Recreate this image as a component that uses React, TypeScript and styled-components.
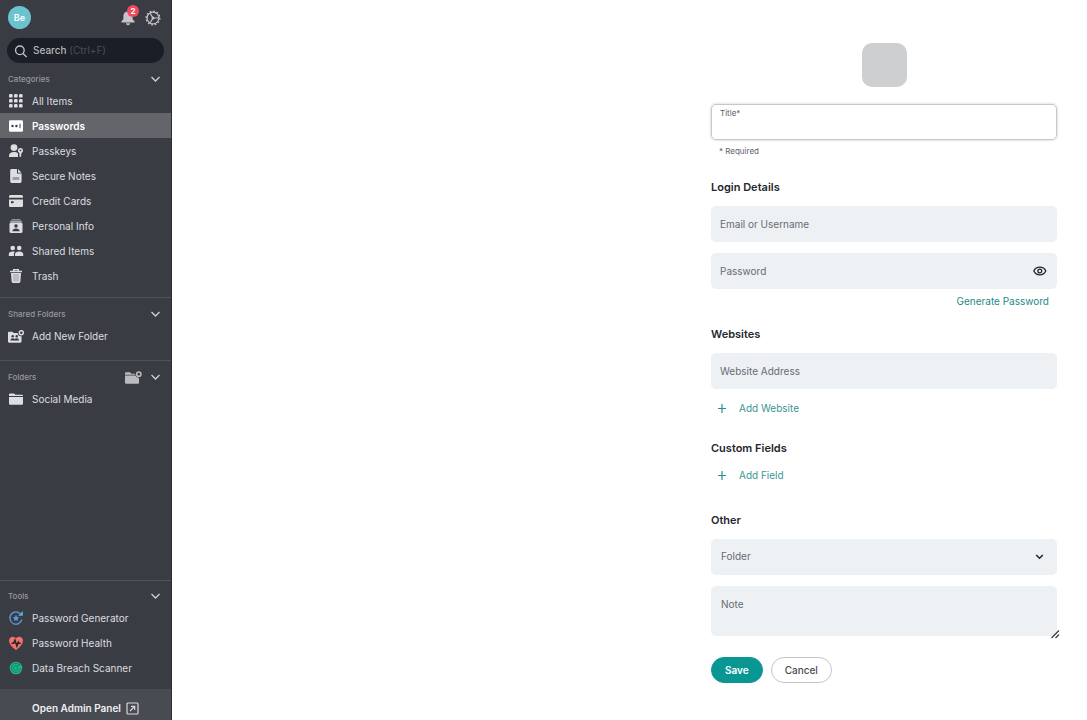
import React from 'react';
import styled, { createGlobalStyle } from 'styled-components';

const GlobalStyle = createGlobalStyle`
  * { box-sizing: border-box; }
  body {
    margin: 0;
    background: #fff;
    font-family: Inter, "Liberation Sans", sans-serif;
    font-size: 10px;
    line-height: 16px;
    color: #23272e;
  }
  button, input, select, textarea { font: inherit; color: inherit; }
  button { cursor: pointer; }
`;

const Page = styled.div`
  display: flex;
  min-height: 100vh;
`;

/* ---------- sidebar ---------- */

const Sidebar = styled.aside`
  flex: 0 0 172px;
  display: flex;
  flex-direction: column;
  background: #3a3c43;
  border-right: 1px solid #2c2e36;
  color: #d3d5d8;
`;

const TopBar = styled.header`
  display: flex;
  align-items: center;
  gap: 9px;
  height: 35px;
  padding: 0 10px 0 8px;
`;

const Avatar = styled.button`
  width: 23px;
  height: 23px;
  margin-right: auto;
  padding: 0;
  border: 0;
  border-radius: 50%;
  background: #6bc3d0;
  color: #fff;
  font-size: 9px;
  font-weight: 600;
`;

const IconButton = styled.button`
  position: relative;
  display: flex;
  padding: 0;
  border: 0;
  background: none;
`;

const Badge = styled.span`
  position: absolute;
  top: -5px;
  right: -3px;
  width: 12px;
  height: 12px;
  border-radius: 50%;
  background: #f4485c;
  color: #fff;
  font-size: 8px;
  font-weight: 700;
  line-height: 12px;
  text-align: center;
`;

const SearchButton = styled.button`
  display: flex;
  align-items: center;
  gap: 5px;
  height: 25px;
  margin: 3px 7px 7px;
  padding: 0 7px;
  border: 0;
  border-radius: 13px;
  background: #1b1e27;
  color: #b4b6ba;
  font-weight: 500;
`;

const SearchText = styled.span`
  padding-bottom: 2px;
`;

const Shortcut = styled.span`
  color: #4b4e57;
  font-weight: 400;
`;

const NavSection = styled.section<{ $divided?: boolean; $bottom?: boolean }>`
  padding: ${(p) => (p.$divided ? '7px 0 12px' : '0 0 9px')};
  border-top: ${(p) => (p.$divided || p.$bottom ? '1px solid #505259' : '0')};
  ${(p) => p.$bottom && 'margin-top: auto; padding-top: 6px;'}
`;

const SectionHead = styled.div`
  display: flex;
  align-items: center;
  gap: 8px;
  height: 18px;
  padding: 0 10px 0 8px;
`;

const SectionTitle = styled.h2`
  flex: 1;
  margin: 0;
  font-size: 8px;
  font-weight: 500;
  line-height: 12px;
  color: #96989d;
`;

const NavLink = styled.a<{ $active?: boolean }>`
  display: flex;
  align-items: center;
  gap: 8px;
  height: 25px;
  padding: 0 8px;
  background: ${(p) => (p.$active ? '#63656b' : 'transparent')};
  color: ${(p) => (p.$active ? '#fff' : '#dcdee0')};
  font-weight: ${(p) => (p.$active ? 600 : 400)};
  text-decoration: none;
  white-space: nowrap;
`;

const AdminLink = styled.a`
  display: flex;
  align-items: center;
  justify-content: center;
  gap: 5px;
  height: 31px;
  padding-top: 7px;
  background: #484b52;
  color: #f0f1f2;
  font-weight: 600;
  text-decoration: none;
`;

/* ---------- form ---------- */

const Main = styled.main`
  flex: 1;
  min-width: 0;
  display: flex;
  justify-content: flex-end;
`;

const Form = styled.form`
  flex: 0 1 406px;
  min-width: 0;
  padding: 43px 30px 36px;
`;

const ItemPicture = styled.div`
  width: 45px;
  height: 44px;
  margin: 0 auto 17px;
  border-radius: 10px;
  background: #cdcfd1;
`;

const Field = styled.label`
  display: flex;
  align-items: center;
  gap: 8px;
  height: 36px;
  padding: 0 9px;
  border-radius: 5px;
  background: #eef1f4;
  color: #666c73;
  & + & { margin-top: 11px; }
`;

const TitleField = styled.label`
  display: flex;
  flex-direction: column;
  height: 36px;
  padding: 2px 8px;
  border: 1px solid #c4c8cc;
  border-radius: 5px;
  box-shadow: 0 0 3px #c4c8cc;
  color: #5c626a;
  font-size: 8px;
  line-height: 12px;
`;

const Input = styled.input`
  flex: 1;
  min-width: 0;
  padding: 0;
  border: 0;
  outline: 0;
  background: none;
  color: #23272e;
`;

const Hint = styled.p`
  margin: 4px 8px 0;
  font-size: 8px;
  line-height: 14px;
  color: #5c626a;
`;

const Group = styled.section<{ $space: number }>`
  margin-top: ${(p) => p.$space}px;
`;

const GroupTitle = styled.h3`
  margin: 0 0 11px;
  font-size: 11px;
  font-weight: 600;
  line-height: 16px;
  color: #23272e;
`;

const TextLink = styled.a`
  display: block;
  width: fit-content;
  margin: 4px 8px 0 auto;
  color: #248a88;
  text-decoration: none;
`;

const AddButton = styled.button`
  display: flex;
  align-items: center;
  gap: 12px;
  margin-top: 11px;
  padding: 0 6px;
  border: 0;
  background: none;
  color: #3b9593;
  line-height: 16px;
`;

const SelectWrap = styled.div`
  display: grid;
  align-items: center;
  & > * { grid-area: 1 / 1; }
  & > svg { justify-self: end; margin-right: 13px; pointer-events: none; }
`;

const Select = styled.select`
  appearance: none;
  width: 100%;
  height: 36px;
  padding: 0 30px 2px 10px;
  border: 0;
  border-radius: 5px;
  background: #eef1f4;
  color: #666c73;
`;

const NoteWrap = styled.div`
  position: relative;
  display: flex;
  margin-top: 11px;
`;

const Note = styled.textarea`
  flex: 1;
  min-width: 0;
  height: 50px;
  padding: 10px;
  border: 0;
  border-radius: 5px;
  background: #eef1f4;
  line-height: 16px;
  resize: none;
  &::placeholder { color: #666c73; opacity: 1; }
`;

const Grip = styled.svg`
  position: absolute;
  right: -3px;
  bottom: -3px;
`;

const Actions = styled.div`
  display: flex;
  gap: 8px;
  margin-top: 21px;
`;

const PillButton = styled.button<{ $primary?: boolean }>`
  height: 26px;
  padding: 0 13px;
  border: 1px solid ${(p) => (p.$primary ? '#0a9794' : '#c3c6cb')};
  border-radius: 13px;
  background: ${(p) => (p.$primary ? '#0a9794' : '#fff')};
  color: ${(p) => (p.$primary ? '#fff' : '#484c53')};
  font-weight: ${(p) => (p.$primary ? 600 : 500)};
`;

/* ---------- icons ---------- */

const Icon = ({ children, size = 16 }: { children: React.ReactNode; size?: number }) => (
  <svg width={size} height={size} viewBox="0 0 16 16" fill="none" aria-hidden="true">
    {children}
  </svg>
);

const light = '#dcdee0';
const bg = '#3a3c43';

const Chevron = () => (
  <svg width="11" height="8" viewBox="0 0 11 8" fill="none" aria-hidden="true">
    <path d="M1.5 2l4 4 4-4" stroke="#d0d2d5" strokeWidth="1.3" />
  </svg>
);

const GridIcon = () => (
  <Icon>
    {[1, 6, 11].map((y) => [1, 6, 11].map((x) => (
      <rect key={`${x}-${y}`} x={x} y={y} width="3.6" height="3.6" rx="1.2" fill={light} />
    )))}
  </Icon>
);

const PasswordIcon = () => (
  <Icon>
    <rect x="1" y="2.2" width="14" height="11.6" rx="1.4" fill="#fff" />
    <circle cx="4.5" cy="8" r="1.2" fill="#3a3c43" />
    <circle cx="8.4" cy="8" r="1.2" fill="#3a3c43" />
    <path d="M12 5.8v4.4" stroke="#3a3c43" />
  </Icon>
);

const PasskeyIcon = () => (
  <Icon>
    <circle cx="6" cy="4.6" r="3.4" fill={light} />
    <path d="M1 14v-1.5C1 10.2 3 9 6 9c1.7 0 3.200.4 4 1.200V14z" fill={light} />
    <path fillRule="evenodd" d="M12.500 5a2.600 2.600 0 0 1 1 5v1l-.8.900.8.900-1.200 1.400-.9-.9V10a2.600 2.600 0 0 1 1.100-5zm0 1.400a.9.9 0 1 0 0 1.800.9.9 0 0 0 0-1.800z" fill={light} />
  </Icon>
);

const NoteIcon = () => (
  <Icon>
    <path d="M3.600 1H9v4.600h4.600v8a1.400 1.400 0 0 1-1.400 1.400H3.600a1.400 1.400 0 0 1-1.400-1.400V2.400A1.400 1.400 0 0 1 3.600 1z" fill={light} />
    <path d="M10 1l3.600 3.700H10z" fill={light} />
    <path d="M4.600 9h6.600v3H4.600z" fill="#9b9da1" />
  </Icon>
);

const CardIcon = () => (
  <Icon>
    <path d="M1 4.800V3.600C1 2.700 1.700 2 2.600 2h10.800c.9 0 1.600.7 1.600 1.600v1.200z" fill={light} />
    <path d="M1 6.400h14v6c0 .9-.7 1.600-1.600 1.600H2.600C1.700 14 1 13.300 1 12.400z" fill={light} />
    <path d="M3 8.200h2.600v2H3z" fill={bg} />
  </Icon>
);

const PersonalIcon = () => (
  <Icon>
    <path d="M4 1h8l1 1.400H3z" fill="#8c8e93" />
    <path d="M2.600 2.800h10.800l1 1.400H1.600z" fill="#a3a5a9" />
    <rect x="1.500" y="4.500" width="13" height="10.500" rx="1.600" fill={light} />
    <circle cx="8" cy="8" r="1.800" fill={bg} />
    <path d="M4.400 13.300c0-1.900 1.500-2.700 3.600-2.700s3.600.8 3.600 2.700z" fill={bg} />
  </Icon>
);

const PeopleIcon = () => (
  <Icon>
    <circle cx="4.700" cy="5" r="2.300" fill={light} />
    <circle cx="11.200" cy="5" r="2.300" fill={light} />
    <path d="M.8 13v-1.800C.8 9.400 2.300 8.500 4.700 8.500c.9 0 1.600.1 2.200.4-.8.700-1 1.500-1 2.400V13z" fill={light} />
    <path d="M7 13v-1.800c0-1.800 1.700-2.700 4.200-2.700s4 .9 4 2.700V13z" fill={light} />
  </Icon>
);

const TrashIcon = () => (
  <Icon>
    <path d="M2 3.500h12M5.700 3V1.600h4.600V3" stroke={light} strokeWidth="1.400" />
    <path d="M3 5h10l-.6 8.600c0 .8-.6 1.400-1.400 1.400H5c-.8 0-1.400-.6-1.400-1.400z" fill={light} />
    <path d="M6 6v7.500M8 6v7.500M10 6v7.500" stroke="#8c8e93" strokeWidth=".8" />
  </Icon>
);

const SharedFolderIcon = () => (
  <Icon>
    <path d="M0 4.900C0 4.200.5 3.700 1.200 3.700h3.300l1.200 1.400h3.900a3.400 3.400 0 0 0 3.900 3v5.400c0 .7-.5 1.200-1.200 1.200H1.200C.5 14.700 0 14.200 0 13.500z" fill={light} />
    <circle cx="13.300" cy="4.700" r="2" stroke={light} strokeWidth="1.400" />
    <circle cx="4.700" cy="8.200" r="1.200" fill={bg} />
    <circle cx="8.700" cy="8.200" r="1.200" fill={bg} />
    <path d="M2.500 12.600c0-1.600.8-2.400 2.200-2.400 1 0 1.600.3 2 .9.400-.6 1-.9 2-.9 1.500 0 2.300.8 2.300 2.400z" fill={bg} />
  </Icon>
);

const NewFolderIcon = () => (
  <Icon size={17}>
    <path d="M0 4.200C0 3.500.5 3 1.200 3h3.600L6 4.400h3.700v1H0z" fill="#b9bbbf" />
    <path d="M0 6h9.800a3.500 3.500 0 0 0 3.400 2.300v4.300c0 .7-.5 1.200-1.200 1.200H1.200c-.7 0-1.200-.5-1.200-1.200z" fill="#b9bbbf" />
    <circle cx="13" cy="4.900" r="2" stroke="#b9bbbf" strokeWidth="1.400" />
  </Icon>
);

const FolderIcon = () => (
  <Icon>
    <path d="M1 5V3.700c0-.7.500-1.200 1.200-1.200h3.900l1.300 1.300h6.400c.7 0 1.200.5 1.200 1.200z" fill={light} />
    <path d="M1 6h14v6.500c0 .8-.6 1.300-1.300 1.300H2.300C1.600 13.800 1 13.300 1 12.500z" fill={light} />
  </Icon>
);

const GeneratorIcon = () => (
  <Icon>
    <path d="M13.900 9.500A6.100 6.100 0 1 1 12.300 3.700" stroke="#5a8fcd" strokeWidth="1.500" />
    <path d="M14.800 1v4.700h-4.700z" fill="#55b4dc" />
    <path d="M8 4.800l1 2.100 2.300.3-1.700 1.600.4 2.300L8 10l-2 1.100.4-2.300-1.700-1.600 2.300-.3z" fill="#5f9ade" />
  </Icon>
);

const HealthIcon = () => (
  <Icon>
    <path d="M8 15C3.500 11.600 1 9 1 5.700 1 3.400 2.700 1.700 4.800 1.700c1.300 0 2.500.7 3.200 1.800.7-1.100 1.900-1.800 3.200-1.800C13.300 1.700 15 3.400 15 5.700 15 9 12.500 11.600 8 15z" fill="#f9706a" />
    <path d="M3.500 8.200h2.200l1.200-2.900 2 5.600 1.400-3.600.6.900h1.800" stroke="#222630" strokeWidth="1.600" />
  </Icon>
);

const ScannerIcon = () => (
  <Icon>
    <circle cx="8" cy="8" r="6.300" fill="#20b58b" />
    <path d="M11.900 5.400A4.600 4.600 0 1 0 12.600 8M10 6.600A2.400 2.400 0 1 0 10.400 8M8 8l4.500-4" stroke="#17806a" strokeWidth="1" />
  </Icon>
);

const BellIcon = () => (
  <Icon>
    <path d="M8 1.500c3 0 4.600 2 4.600 4.800v2.900l1.900 2.100v1.200h-13v-1.200l1.900-2.100V6.300C3.400 3.500 5 1.500 8 1.500zM6 13.300h4c0 1.200-.9 1.900-2 1.900s-2-.7-2-1.900z" fill="#c3c5c8" />
  </Icon>
);

const SettingsIcon = () => (
  <Icon>
    <circle cx="8" cy="8" r="6.900" stroke="#c3c5c8" strokeWidth="1.200" strokeDasharray="1.800 1.800" />
    <circle cx="8" cy="8" r="5.900" stroke="#c3c5c8" strokeWidth="1.200" />
    <path d="M5 3l3 5-3 5M8 8h6" stroke="#c3c5c8" strokeWidth="1.200" />
    <circle cx="8" cy="8" r="1.500" fill="#c3c5c8" />
  </Icon>
);

const SearchIcon = () => (
  <Icon size={14}>
    <circle cx="6.700" cy="7.200" r="4.900" stroke="#c3c5c8" strokeWidth="1.500" />
    <path d="M10.300 10.800l4.200 4.200" stroke="#c3c5c8" strokeWidth="1.600" />
  </Icon>
);

const ExternalIcon = () => (
  <svg width="13" height="13" viewBox="0 0 13 13" fill="none" aria-hidden="true">
    <rect x="1" y="1" width="11" height="11" rx="1" stroke="#d7d9db" strokeWidth="1.200" />
    <path d="M4 9l4.500-4.500M5 4.300h3.700V8" stroke="#d7d9db" strokeWidth="1.200" />
  </svg>
);

const EyeIcon = () => (
  <svg width="15" height="10" viewBox="0 0 15 10" fill="none" aria-hidden="true">
    <path d="M.8 5C2 2.500 4.200 1.200 6.800 1.200S11.600 2.500 12.800 5C11.600 7.500 9.400 8.800 6.800 8.800S2 7.500.8 5z" stroke="#20242b" strokeWidth="1.300" />
    <circle cx="6.800" cy="5" r="1.900" stroke="#20242b" strokeWidth="1.300" />
  </svg>
);

const PlusIcon = () => (
  <svg width="10" height="10" viewBox="0 0 10 10" fill="none" aria-hidden="true">
    <path d="M5 1v9M1 5.500h8" stroke="#2a908e" strokeWidth="1.200" />
  </svg>
);

/* ---------- content ---------- */

const categories = [
  { name: 'All Items', icon: <GridIcon /> },
  { name: 'Passwords', icon: <PasswordIcon />, active: true },
  { name: 'Passkeys', icon: <PasskeyIcon /> },
  { name: 'Secure Notes', icon: <NoteIcon /> },
  { name: 'Credit Cards', icon: <CardIcon /> },
  { name: 'Personal Info', icon: <PersonalIcon /> },
  { name: 'Shared Items', icon: <PeopleIcon /> },
  { name: 'Trash', icon: <TrashIcon /> },
];

const tools = [
  { name: 'Password Generator', icon: <GeneratorIcon /> },
  { name: 'Password Health', icon: <HealthIcon /> },
  { name: 'Data Breach Scanner', icon: <ScannerIcon /> },
];

const NavHead = ({ title, children }: { title: string; children?: React.ReactNode }) => (
  <SectionHead>
    <SectionTitle>{title}</SectionTitle>
    {children}
    <IconButton type="button" aria-label={`Collapse ${title}`}><Chevron /></IconButton>
  </SectionHead>
);

export default function App() {
  return (
    <Page>
      <GlobalStyle />
      <Sidebar>
        <TopBar>
          <Avatar type="button">Be</Avatar>
          <IconButton type="button" aria-label="Notifications">
            <BellIcon />
            <Badge>2</Badge>
          </IconButton>
          <IconButton type="button" aria-label="Settings"><SettingsIcon /></IconButton>
        </TopBar>
        <SearchButton type="button">
          <SearchIcon />
          <SearchText>Search <Shortcut>(Ctrl+F)</Shortcut></SearchText>
        </SearchButton>
        <NavSection>
          <NavHead title="Categories" />
          {categories.map((c) => (
            <NavLink key={c.name} href="#" $active={c.active}>{c.icon}{c.name}</NavLink>
          ))}
        </NavSection>
        <NavSection $divided>
          <NavHead title="Shared Folders" />
          <NavLink href="#"><SharedFolderIcon />Add New Folder</NavLink>
        </NavSection>
        <NavSection $divided>
          <NavHead title="Folders">
            <IconButton type="button" aria-label="New folder"><NewFolderIcon /></IconButton>
          </NavHead>
          <NavLink href="#"><FolderIcon />Social Media</NavLink>
        </NavSection>
        <NavSection $bottom>
          <NavHead title="Tools" />
          {tools.map((t) => (
            <NavLink key={t.name} href="#">{t.icon}{t.name}</NavLink>
          ))}
        </NavSection>
        <AdminLink href="#">Open Admin Panel <ExternalIcon /></AdminLink>
      </Sidebar>

      <Main>
        <Form onSubmit={(e) => e.preventDefault()}>
          <ItemPicture />
          <TitleField>
            Title*
            <Input name="title" required />
          </TitleField>
          <Hint>* Required</Hint>

          <Group $space={21}>
            <GroupTitle>Login Details</GroupTitle>
            <Field>
              <span>Email or Username</span>
              <Input name="username" />
            </Field>
            <Field>
              <span>Password</span>
              <Input name="password" type="password" />
              <IconButton type="button" aria-label="Show password"><EyeIcon /></IconButton>
            </Field>
            <TextLink href="#">Generate Password</TextLink>
          </Group>

          <Group $space={17}>
            <GroupTitle>Websites</GroupTitle>
            <Field>
              <span>Website Address</span>
              <Input name="website" />
            </Field>
            <AddButton type="button"><PlusIcon />Add Website</AddButton>
          </Group>

          <Group $space={24}>
            <GroupTitle>Custom Fields</GroupTitle>
            <AddButton type="button"><PlusIcon />Add Field</AddButton>
          </Group>

          <Group $space={29}>
            <GroupTitle>Other</GroupTitle>
            <SelectWrap>
              <Select aria-label="Folder" defaultValue="">
                <option value="">Folder</option>
                <option>Social Media</option>
              </Select>
              <svg width="9" height="6" viewBox="0 0 9 6" fill="none" aria-hidden="true">
                <path d="M1.200 1l3.300 3.300L7.800 1" stroke="#20242b" strokeWidth="1.500" />
              </svg>
            </SelectWrap>
            <NoteWrap>
              <Note aria-label="Note" placeholder="Note" />
              <Grip width="10" height="10" viewBox="0 0 10 10" fill="none" aria-hidden="true">
                <path d="M1.500 9l7.500-7.500M5.500 9L9 5.500" stroke="#33373e" strokeWidth="1.200" />
              </Grip>
            </NoteWrap>
          </Group>

          <Actions>
            <PillButton type="submit" $primary>Save</PillButton>
            <PillButton type="button">Cancel</PillButton>
          </Actions>
        </Form>
      </Main>
    </Page>
  );
}
